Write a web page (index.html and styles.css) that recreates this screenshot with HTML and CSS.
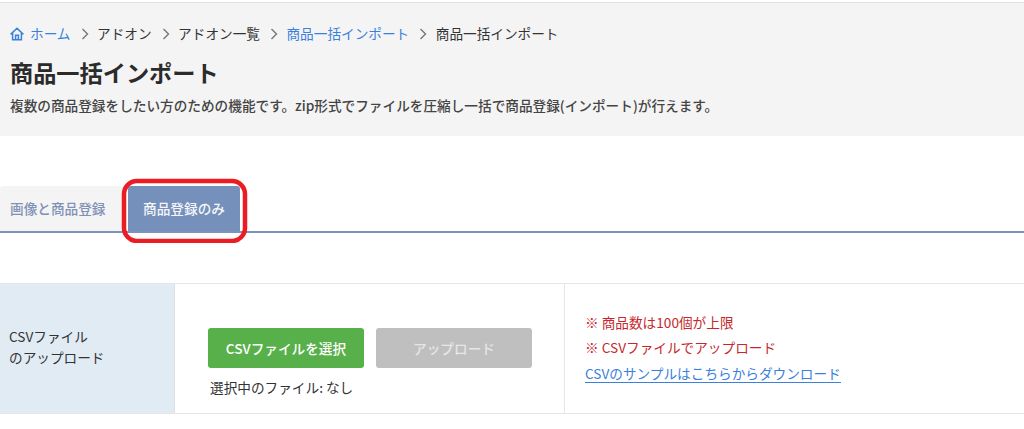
FILE: index.html
```html
<!DOCTYPE html>
<html lang="ja">
<head>
<meta charset="utf-8">
<title>商品一括インポート</title>
<link rel="stylesheet" href="styles.css">
</head>
<body>
<header class="head">
  <nav class="crumbs">
    <a class="crumb link" href="#"><svg class="home" viewBox="0 0 14 14" width="14" height="14"><path d="M.6 7.4 7 1.2 13.4 7.4M2.6 5.6V12.8H11.4V5.6M5.6 12.8V8.2H8.4V12.8" fill="none" stroke="#3a80dc" stroke-width="1.5"/></svg>ホーム</a>
    <svg class="sep" viewBox="0 0 8 12" width="8" height="12"><path d="M1.5 1 6.5 6 1.5 11" fill="none" stroke="#777" stroke-width="1.4"/></svg>
    <span class="crumb">アドオン</span>
    <svg class="sep" viewBox="0 0 8 12" width="8" height="12"><path d="M1.5 1 6.5 6 1.5 11" fill="none" stroke="#777" stroke-width="1.4"/></svg>
    <span class="crumb">アドオン一覧</span>
    <svg class="sep" viewBox="0 0 8 12" width="8" height="12"><path d="M1.5 1 6.5 6 1.5 11" fill="none" stroke="#777" stroke-width="1.4"/></svg>
    <a class="crumb link" href="#">商品一括インポート</a>
    <svg class="sep" viewBox="0 0 8 12" width="8" height="12"><path d="M1.5 1 6.5 6 1.5 11" fill="none" stroke="#777" stroke-width="1.4"/></svg>
    <span class="crumb">商品一括インポート</span>
  </nav>
  <h1 class="title">商品一括インポート</h1>
  <p class="lead">複数の商品登録をしたい方のための機能です。zip形式でファイルを圧縮し一括で商品登録(インポート)が行えます。</p>
</header>
<div class="tabs">
  <a class="tab" href="#">画像と商品登録</a>
  <a class="tab active" href="#">商品登録のみ</a>
  <svg class="mark" viewBox="0 0 128 65" width="128" height="65"><rect x="4" y="3" width="121" height="60" rx="13" fill="none" stroke="#ec1c24" stroke-width="4.5"/></svg>
</div>
<section class="row">
  <div class="label">CSVファイル<br>のアップロード</div>
  <div class="upload">
    <div class="buttons">
      <button class="btn green" type="button">CSVファイルを選択</button>
      <button class="btn gray" type="button">アップロード</button>
    </div>
    <p class="selected">選択中のファイル: なし</p>
  </div>
  <div class="notes">
    <p class="note">※ 商品数は100個が上限</p>
    <p class="note">※ CSVファイルでアップロード</p>
    <a class="sample" href="#">CSVのサンプルはこちらからダウンロード</a>
  </div>
</section>
</body>
</html>
```
FILE: styles.css
```css
* { box-sizing: border-box; }
html, body { margin: 0; padding: 0; }
body {
  background: #fff;
  color: #333;
  font-family: "Noto Sans CJK JP", "Noto Sans", sans-serif;
  font-size: 13.65px;
  height: 429px;
  overflow: hidden;
}
a { text-decoration: none; }
p { margin: 0; }
.head {
  margin-top: 2px;
  height: 134px;
  padding: 21px 10px 0;
  background: #f4f4f4;
  border-top: 1px solid #e2e2e2;
}
.crumbs { display: flex; align-items: center; height: 19px; }
.crumb { line-height: 19px; white-space: nowrap; }
.link { color: #3a80dc; display: flex; align-items: center; }
.home { margin-right: 6px; }
.sep { margin: 0 8.5px 0 10px; }
.title {
  margin: 13px 0 0;
  font-size: 23.2px;
  line-height: 32px;
  font-weight: 700;
  color: #2b2b2b;
}
.lead { margin-top: 7px; line-height: 20px; color: #444; font-weight: 500; white-space: nowrap; }
.tabs {
  position: relative;
  margin-top: 50px;
  height: 47px;
  display: flex;
  align-items: flex-end;
  gap: 5px;
  border-bottom: 2px solid #7b93bd;
}
.tab {
  height: 45px;
  display: flex;
  align-items: center;
  font-weight: 500;
  border-radius: 3px 3px 0 0;
  padding-bottom: 2px;
}
.tab:not(.active) { width: 123px; padding-left: 10px; background: #f4f4f4; color: #7f92b6; }
.active { width: 112px; justify-content: center; background: #7590bb; color: #f4f6fa; }
.mark { position: absolute; left: 120px; top: -8px; }
.row {
  margin-top: 50px;
  height: 131px;
  display: grid;
  grid-template-columns: 175px 390px 1fr;
  border-top: 1px solid #e6e6e6;
  border-bottom: 1px solid #e6e6e6;
}
.label {
  background: #e1ebf4;
  border-right: 1px solid #dcdfe3;
  padding: 0 9px 3px;
  display: flex;
  align-items: center;
  line-height: 21px;
  color: #333;
}
.upload { padding: 44px 0 0 33px; border-right: 1px solid #e6e6e6; }
.buttons { display: flex; gap: 12px; }
.btn {
  width: 156px;
  height: 40px;
  border: 0;
  border-radius: 3px;
  color: #fff;
  font: 500 13.65px "Noto Sans CJK JP", "Noto Sans", sans-serif;
  padding: 0;
}
.green { background: #58b04b; }
.gray { background: #bfbfbf; color: #e6e6e6; }
.selected { margin: 9px 0 0 2px; line-height: 20px; color: #333; }
.notes { padding: 28px 0 0 20px; }
.note { color: #c5282c; line-height: 20px; margin-bottom: 5px; }
.sample { color: #3a80dc; line-height: 20px; display: inline-block; border-bottom: 1px solid #3a80dc; height: 20px; margin-top: 1px; }
```
